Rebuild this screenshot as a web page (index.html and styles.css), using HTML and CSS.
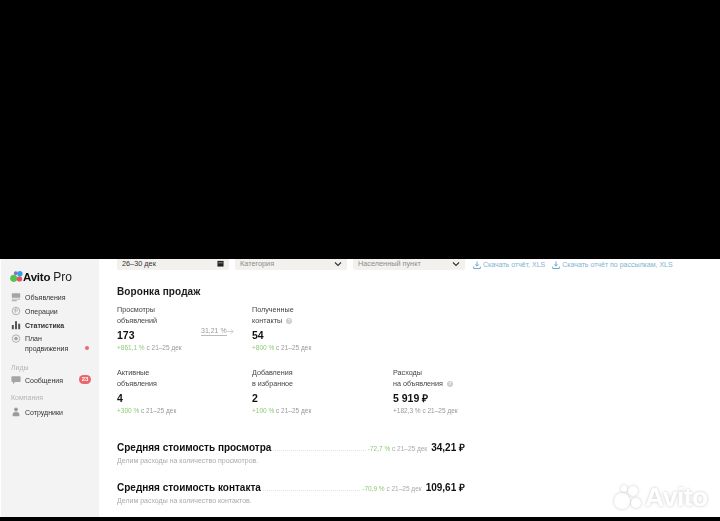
FILE: index.html
```html
<!DOCTYPE html>
<html lang="ru">

<head>
	<meta charset="UTF-8">
	<meta name="viewport" content="width=device-width, initial-scale=1.0">
	<title>Avito Pro</title>
	<link rel="stylesheet" href="styles.css">
</head>

<body>
	<div class="frame">
		<aside class="sidebar">
			<div class="logo">
				<svg class="logo-mark" viewBox="0 0 14 14" width="13" height="13">
					<circle cx="4" cy="9" r="3.8" fill="#4fc44f" />
					<circle cx="10.2" cy="9.6" r="2.8" fill="#e8505b" />
					<circle cx="6.2" cy="3.4" r="2" fill="#9a5fd0" />
					<circle cx="10.6" cy="4" r="2.9" fill="#2aa5e8" />
				</svg>
				<span class="logo-name">Avito</span><span class="logo-pro">Pro</span>
			</div>
			<nav class="nav">
				<a class="nav-item">
					<svg class="nav-icon" viewBox="0 0 12 12"><path d="M1 1.5h10v5.5H1zM1 8h10v1H1zM1 10h6v1H1z" fill="#a5a5a5" /></svg>
					Объявления
				</a>
				<a class="nav-item">
					<svg class="nav-icon" viewBox="0 0 12 12"><circle cx="6" cy="6" r="4.5" fill="none" stroke="#a5a5a5" /><path d="M5 3.5h1.6a1.2 1.2 0 0 1 0 2.6H5zM5 3.5v5" fill="none" stroke="#a5a5a5" stroke-width=".8" /></svg>
					Операции
				</a>
				<a class="nav-item is-active">
					<svg class="nav-icon" viewBox="0 0 12 12"><path d="M1 6h2.4v5H1zM4.8 1.5h2.4V11H4.8zM8.6 4.5H11V11H8.6z" fill="#555" /></svg>
					Статистика
				</a>
				<a class="nav-item nav-item-tall">
					<svg class="nav-icon" viewBox="0 0 12 12"><circle cx="6" cy="5.5" r="4.5" fill="none" stroke="#a5a5a5" /><circle cx="6" cy="5.5" r="2.2" fill="#a5a5a5" /></svg>
					<span>План<br>продвижения</span>
					<i class="dot"></i>
				</a>
				<div class="nav-label nav-label-leads">Лиды</div>
				<a class="nav-item">
					<svg class="nav-icon" viewBox="0 0 12 12"><path d="M1.5 1.5h9a1 1 0 0 1 1 1v5a1 1 0 0 1-1 1H5L2.5 11V8.5h-1a1 1 0 0 1-1-1v-5a1 1 0 0 1 1-1z" fill="#a5a5a5" /></svg>
					Сообщения
					<b class="badge">23</b>
				</a>
				<div class="nav-label nav-label-company">Компания</div>
				<a class="nav-item">
					<svg class="nav-icon" viewBox="0 0 12 12"><circle cx="6" cy="3" r="2.3" fill="#9b9b9b" /><path d="M2 11V8.5C2 6.8 3.5 6 6 6s4 .8 4 2.5V11z" fill="#9b9b9b" /></svg>
					Сотрудники
				</a>
			</nav>
		</aside>

		<main class="content">
			<div class="filters">
				<div class="select">
					<span class="select-value">26–30 дек</span>
					<svg class="select-icon" viewBox="0 0 8 8" width="7" height="7"><path d="M.5 1h7v6.5h-7z" fill="#222" /><path d="M1.5 3h5v.6h-5z" fill="#f3f1ee" /></svg>
				</div>
				<div class="select">
					<span class="select-hint">Категория</span>
					<svg class="select-icon" viewBox="0 0 8 8" width="8" height="8"><path d="M1 2.5l3 3 3-3" fill="none" stroke="#333" stroke-width="1.1" /></svg>
				</div>
				<div class="select">
					<span class="select-hint">Населенный пункт</span>
					<svg class="select-icon" viewBox="0 0 8 8" width="8" height="8"><path d="M1 2.5l3 3 3-3" fill="none" stroke="#333" stroke-width="1.1" /></svg>
				</div>
				<a class="download">
					<svg viewBox="0 0 8 8" width="8" height="8"><path d="M4 .5v4.5M2.2 3.4L4 5.2l1.8-1.8M.7 5.5v2h6.6v-2" fill="none" stroke="#4d94c0" stroke-width=".8" /></svg>
					Скачать отчёт, XLS
				</a>
				<a class="download">
					<svg viewBox="0 0 8 8" width="8" height="8"><path d="M4 .5v4.5M2.2 3.4L4 5.2l1.8-1.8M.7 5.5v2h6.6v-2" fill="none" stroke="#4d94c0" stroke-width=".8" /></svg>
					Скачать отчёт по рассылкам, XLS
				</a>
			</div>

			<h2 class="section-title">Воронка продаж</h2>

			<div class="funnel">
				<div class="metric">
					<div class="metric-label">Просмотры<br>объявлений</div>
					<div class="metric-value">173</div>
					<div class="metric-delta"><em>+861,1 %</em> с 21–25 дек</div>
					<div class="conversion">
						<span class="conversion-num">31,21 %</span>
						<svg viewBox="0 0 8 8" width="7" height="7"><path d="M.5 4h6.5M4.5 1.5L7 4 4.5 6.5" fill="none" stroke="#bbb" stroke-width=".8" /></svg>
					</div>
				</div>
				<div class="metric">
					<div class="metric-label">Полученные<br>контакты <i class="hint">?</i></div>
					<div class="metric-value">54</div>
					<div class="metric-delta"><em>+800 %</em> с 21–25 дек</div>
				</div>
				<div class="metric"></div>
				<div class="metric">
					<div class="metric-label">Активные<br>объявления</div>
					<div class="metric-value">4</div>
					<div class="metric-delta"><em>+300 %</em> с 21–25 дек</div>
				</div>
				<div class="metric">
					<div class="metric-label">Добавления<br>в избранное</div>
					<div class="metric-value">2</div>
					<div class="metric-delta"><em>+100 %</em> с 21–25 дек</div>
				</div>
				<div class="metric">
					<div class="metric-label">Расходы<br>на объявления <i class="hint">?</i></div>
					<div class="metric-value">5 919 ₽</div>
					<div class="metric-delta">+182,3 % с 21–25 дек</div>
				</div>
			</div>

			<div class="cost">
				<div class="cost-row">
					<span class="cost-title">Средняя стоимость просмотра</span>
					<span class="cost-leader"></span>
					<span class="cost-delta"><em>-72,7 %</em> с 21–25 дек</span>
					<span class="cost-value">34,21 ₽</span>
				</div>
				<div class="cost-desc">Делим расходы на количество просмотров.</div>
			</div>
			<div class="cost">
				<div class="cost-row">
					<span class="cost-title">Средняя стоимость контакта</span>
					<span class="cost-leader"></span>
					<span class="cost-delta"><em>-70,9 %</em> с 21–25 дек</span>
					<span class="cost-value">109,61 ₽</span>
				</div>
				<div class="cost-desc">Делим расходы на количество контактов.</div>
			</div>
		</main>

		<div class="watermark">
			<svg viewBox="0 0 30 26" width="30" height="26">
				<circle cx="8" cy="17" r="8" fill="#fff" />
				<circle cx="22" cy="19" r="5" fill="#fff" />
				<circle cx="10" cy="4.5" r="3.2" fill="#fff" />
				<circle cx="19" cy="7" r="5" fill="#fff" />
			</svg>
			<span>Avito</span>
		</div>
	</div>
</body>

</html>
```

FILE: styles.css
```css
* {
	box-sizing: border-box;
}

html,
body {
	height: 100%;
}

body {
	margin: 0;
	background-color: #000;
	font-family: "Liberation Sans", Arial, sans-serif;
	color: #222;
	overflow: hidden;
}

.frame {
	position: relative;
	display: flex;
	height: 258px;
	margin-top: 259px;
	padding-left: 1px;
	background-color: #fff;
	overflow: hidden;
}

em {
	font-style: normal;
	color: #8ccb78;
}

/* sidebar */
.sidebar {
	flex: none;
	width: 98px;
	padding: 10px 0 0 10px;
	background-color: #f3f3f3;
}

.logo {
	display: flex;
	align-items: center;
	height: 15px;
	margin-bottom: 6px;
	margin-left: -1px;
	filter: blur(0.3px);
}

.logo-mark {
	flex: none;
}

.logo-name {
	font-size: 11.5px;
	font-weight: bold;
	letter-spacing: -0.2px;
	color: #111;
}

.logo-pro {
	margin-left: 3px;
	font-size: 12px;
	color: #222;
}

.nav {
	filter: blur(0.3px);
}

.nav-item {
	position: relative;
	display: flex;
	align-items: center;
	gap: 4px;
	height: 14px;
	font-size: 7px;
	color: #333;
}

.nav-item.is-active {
	font-weight: bold;
}

.nav-item-tall {
	align-items: flex-start;
	height: 24px;
	line-height: 10px;
	padding-top: 2px;
}

.nav-icon {
	flex: none;
	width: 10px;
	height: 10px;
}

.dot {
	position: absolute;
	left: 74px;
	top: 14px;
	width: 4px;
	height: 4px;
	border-radius: 50%;
	background-color: #ee6a6a;
}

.badge {
	position: absolute;
	left: 68px;
	top: 2px;
	width: 12px;
	height: 9px;
	border-radius: 5px;
	background-color: #e8666c;
	color: #fff;
	font-size: 6px;
	line-height: 9px;
	text-align: center;
}

.nav-label {
	font-size: 7px;
	line-height: 10px;
	color: #b5b5b5;
}

.nav-label-leads {
	margin-top: 7px;
	height: 10px;
}

.nav-label-company {
	margin-top: 6px;
	height: 12px;
}

/* main column */
.content {
	flex: 1;
	min-width: 0;
	padding-left: 18px;
}

.filters {
	display: flex;
	align-items: center;
	height: 11px;
}

.select {
	display: flex;
	align-items: center;
	justify-content: space-between;
	flex: none;
	width: 112px;
	height: 18px;
	margin-top: -7px;
	margin-right: 6px;
	padding: 5px 5px 0 5px;
	border-radius: 2px;
	background-color: #f3f1ee;
	font-size: 7.3px;
}

.select-value {
	color: #333;
}

.select-hint {
	color: #8d8d8d;
}

.select-icon {
	flex: none;
}

.download {
	display: flex;
	align-items: center;
	gap: 2px;
	flex: none;
	margin-left: 2px;
	margin-right: 5px;
	font-size: 7px;
	color: #7fb2d0;
	white-space: nowrap;
}

.section-title {
	margin: 15px 0 0;
	font-size: 10px;
	line-height: 13px;
	font-weight: bold;
	letter-spacing: 0.1px;
	color: #1a1a1a;
	filter: blur(0.2px);
}

.funnel {
	display: grid;
	grid-template-columns: 135px 141px 100px;
	grid-auto-rows: 63px;
	margin-top: 6px;
	filter: blur(0.3px);
}

.metric {
	position: relative;
}

.metric-label {
	font-size: 7.2px;
	line-height: 11px;
	color: #444;
}

.metric-value {
	margin-top: 2px;
	font-size: 10.5px;
	line-height: 14px;
	font-weight: bold;
	color: #111;
}

.metric-delta {
	font-size: 6.5px;
	line-height: 11px;
	color: #999;
}

.hint {
	display: inline-block;
	width: 6px;
	height: 6px;
	margin-left: 2px;
	border-radius: 50%;
	background-color: #ccc;
	color: #fff;
	font-size: 5px;
	font-style: normal;
	line-height: 6px;
	text-align: center;
}

.conversion {
	position: absolute;
	left: 84px;
	top: 23px;
	display: flex;
	align-items: center;
	font-size: 7px;
	color: #999;
}

.conversion-num {
	padding-bottom: 1px;
	border-bottom: 1px solid #bbb;
}

.cost {
	width: 348px;
	margin-bottom: 14px;
	filter: blur(0.2px);
}

.funnel + .cost {
	margin-top: 10px;
}

.cost-row {
	display: flex;
	align-items: baseline;
	height: 14px;
}

.cost-title {
	flex: none;
	font-size: 10px;
	font-weight: bold;
	color: #111;
}

.cost-leader {
	flex: 1;
	margin: 0 2px;
	border-bottom: 1px dotted #e2e2e2;
}

.cost-delta {
	flex: none;
	font-size: 6.5px;
	color: #aaa;
}

.cost-value {
	flex: none;
	margin-left: 4px;
	font-size: 10px;
	font-weight: bold;
	color: #111;
}

.cost-desc {
	margin-top: 1px;
	font-size: 7px;
	line-height: 11px;
	color: #aaa;
}

/* watermark */
.watermark {
	position: absolute;
	left: 614px;
	top: 225px;
	display: flex;
	align-items: center;
	gap: 1px;
	filter: drop-shadow(0 0 1.5px rgba(0, 0, 0, 0.22));
}

.watermark span {
	font-size: 26.5px;
	font-weight: bold;
	line-height: 26px;
	letter-spacing: -0.5px;
	color: #fff;
}
```
